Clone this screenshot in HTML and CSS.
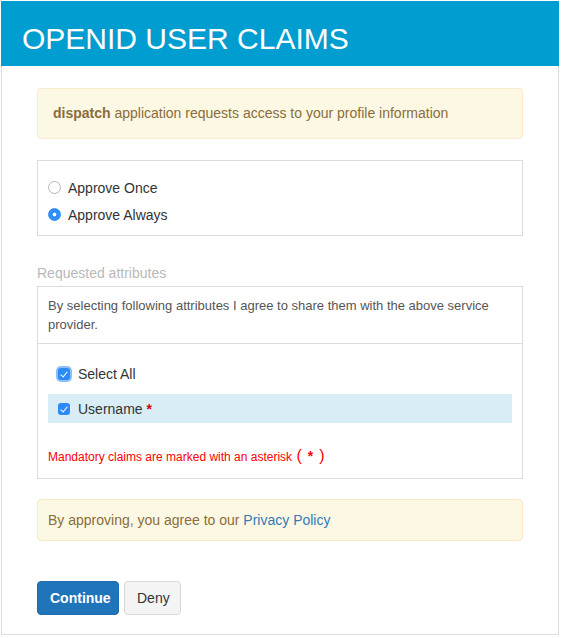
FILE: index.html
```html
<!DOCTYPE html>
<html>
<head>
<meta charset="utf-8">
<link rel="stylesheet" href="styles.css">
</head>
<body>
<div class="page">
  <header class="header"><h1 class="title">OPENID USER CLAIMS</h1></header>
  <main class="content">
    <div class="alert alert-top"><b>dispatch</b> application requests access to your profile information</div>

    <div class="box radios">
      <label class="opt"><span class="radio"></span>Approve Once</label>
      <label class="opt"><span class="radio checked"></span>Approve Always</label>
    </div>

    <div class="section-label">Requested attributes</div>

    <div class="box attrs">
      <div class="attrs-head">By selecting following attributes I agree to share them with the above service provider.</div>
      <div class="attrs-body">
        <label class="row"><span class="check focus"></span>Select All</label>
        <label class="row row-hl"><span class="check"></span>Username <span class="req">*</span></label>
        <p class="mandatory">Mandatory claims are marked with an asterisk <span class="paren">(</span><span class="star">*</span><span class="paren">)</span></p>
      </div>
    </div>

    <div class="alert alert-bottom">By approving, you agree to our <a class="link" href="#">Privacy Policy</a></div>

    <div class="actions">
      <button class="btn btn-primary">Continue</button>
      <button class="btn btn-default">Deny</button>
    </div>
  </main>
</div>
</body>
</html>
```
FILE: styles.css
```css
* { box-sizing: border-box; }
html, body { margin: 0; padding: 0; background: #fff; }
body {
  font-family: "Liberation Sans", Arial, Helvetica, sans-serif;
  font-size: 14px;
  color: #333;
  padding: 1px 0 0 1px;
}
.page {
  width: 558px;
  border: 1px solid #dcdcdc;
  border-top: none;
}
.header {
  background: #009dd1;
  height: 65px;
  padding: 23px 0 0 21px;
  margin: 0 -1px;
}
.title {
  margin: 0;
  color: #fff;
  font-weight: normal;
  font-size: 30px;
  line-height: 30px;
}
.content {
  padding: 22px 35px 19px 35px;
}
.alert {
  background: #fcf8e3;
  border: 1px solid #faebcc;
  color: #8a6d3b;
  border-radius: 4px;
}
.alert-top {
  padding: 15px 15px;
  line-height: 19px;
}
.alert-bottom {
  margin-top: 20px;
  padding: 10px 10px;
  line-height: 20px;
}
.link { color: #337ab7; text-decoration: none; }
.box {
  border: 1px solid #dcdcdc;
}
.radios {
  margin-top: 21px;
  padding: 13px 10px 7px 10px;
}
.opt {
  display: flex;
  align-items: center;
  height: 27px;
  gap: 7px;
}
.radio {
  width: 13px;
  height: 13px;
  border-radius: 50%;
  border: 1px solid #b5b5b5;
  background: #fff;
  flex: none;
}
.radio.checked {
  border-color: #2f8ef7;
  background: radial-gradient(circle, #fff 0 1.6px, #2f8ef7 2.2px);
}
.section-label {
  margin-top: 27px;
  margin-bottom: 3px;
  line-height: 20px;
  color: #b9b9b9;
}
.attrs-head {
  padding: 9px 10px;
  font-size: 13px;
  line-height: 19px;
  color: #555;
  border-bottom: 1px solid #dcdcdc;
}
.attrs-body {
  padding: 15px 10px 11px 10px;
}
.row {
  display: flex;
  align-items: center;
  height: 29px;
  padding-left: 10px;
  gap: 8px;
}
.row + .row { margin-top: 6px; }
.row-hl { background: #d9edf7; }
.check {
  width: 12px;
  height: 12px;
  border-radius: 3px;
  background: #2b8bf6;
  flex: none;
  position: relative;
}
.check::after {
  content: "";
  position: absolute;
  left: 4px;
  top: 2px;
  width: 3px;
  height: 6px;
  border: solid #fff;
  border-width: 0 1.5px 1.5px 0;
  transform: rotate(40deg);
}
.check.focus {
  box-shadow: 0 0 0 2px #8fbef5;
}
.req {
  color: #d00;
  font-weight: bold;
  margin-left: -4px;
}
.mandatory {
  margin: 23px 0 0 0;
  font-size: 12px;
  line-height: 20px;
  color: #f00;
}
.mandatory .paren { font-size: 16px; margin: 0 1px; }
.mandatory .star { font-size: 14px; font-weight: bold; margin: 0 5px; }
.actions {
  margin-top: 40px;
  display: flex;
  gap: 5px;
}
.btn {
  font-family: inherit;
  font-size: 14px;
  line-height: 20px;
  padding: 6px 12px;
  border-radius: 4px;
  border: 1px solid transparent;
  cursor: pointer;
}
.btn-primary {
  background: #1f74ba;
  border-color: #1e6cad;
  color: #fff;
  font-weight: bold;
  width: 82px;
}
.btn-default {
  background: #f4f4f4;
  border-color: #d9d9d9;
  color: #333;
  width: 57px;
}
```
